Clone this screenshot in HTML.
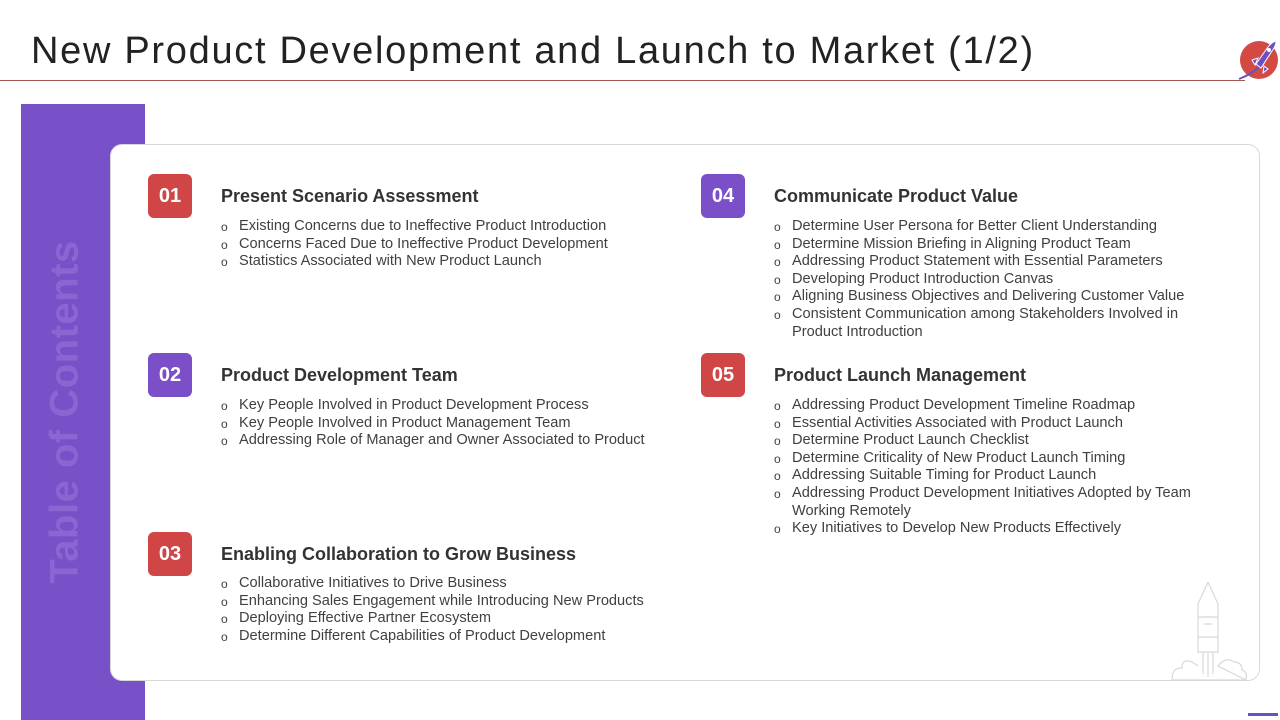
<!DOCTYPE html>
<html><head><meta charset="utf-8"><style>
*{margin:0;padding:0;box-sizing:border-box}
body{width:1280px;height:720px;overflow:hidden;background:#fff;font-family:"Liberation Sans",sans-serif;position:relative}
.title{position:absolute;left:31px;top:30px;font-size:38px;color:#222;letter-spacing:1.7px;white-space:nowrap}
.rule{position:absolute;left:0;top:80px;width:1245px;height:1px;background:#a5584f}
.side{position:absolute;left:21px;top:104px;width:124px;height:616px;background:#7850c8}
.vt{position:absolute;left:65px;top:412px;transform:translate(-50%,-50%) rotate(-90deg);font-size:40px;font-weight:bold;color:#8a66d2;white-space:nowrap;letter-spacing:0.5px}
.card{position:absolute;left:110px;top:144px;width:1150px;height:537px;background:#fff;border:1px solid #d8d8d8;border-radius:12px}
.badge{position:absolute;width:44px;height:44px;border-radius:6px;color:#fff;font-weight:bold;font-size:20px;text-align:center;line-height:44px}
.r{background:#d04545}.p{background:#7a4fc8}
.h{position:absolute;font-size:18px;font-weight:bold;color:#333;white-space:nowrap}
ul{position:absolute;list-style:none;font-size:14.6px;line-height:17.6px;color:#404040}
li{padding-left:18px;position:relative}
li:before{content:"o";position:absolute;left:0;top:1px;font-size:12px}
</style></head><body>
<div class="title">New Product Development and Launch to Market (1/2)</div>
<div class="rule"></div>
<svg style="position:absolute;left:1236px;top:38px" width="44" height="44" viewBox="0 0 44 44">
<circle cx="23" cy="22" r="19" fill="#d34a44"/>
<path d="M3 41 Q16 36 24 28" stroke="#6c4fc4" stroke-width="2" fill="none"/>
<path d="M20 26 L32 9 Q36 4 40 3 Q40 8 36 13 L25 30 Z" fill="#6c4fc4" stroke="#fff" stroke-width="1"/>
<path d="M22 20 L16 22 L19 27 Z M28 28 L27 35 L32 31 Z" fill="#6c4fc4" stroke="#fff" stroke-width="1"/>
<circle cx="33" cy="12" r="2" fill="#fff"/>
</svg>
<div class="side"></div>
<div class="vt">Table of Contents</div>
<div class="card"></div>
<svg style="position:absolute;left:1170px;top:582px" width="80" height="100" viewBox="0 0 80 100" fill="none" stroke="#d8d8d8" stroke-width="1.2">
<path d="M38 0 L28 22 L28 70 L48 70 L48 22 Z"/><path d="M28 35 H48 M28 55 H48 M34 42 H42"/>
<path d="M33 70 V92 M38 70 V95 M43 70 V92"/>
<path d="M2 98 Q2 85 12 86 Q12 76 22 80 L28 84 M48 84 Q56 74 64 80 Q72 80 72 88 Q78 90 76 98 Z M2 98 H76"/>
</svg>
<div style="position:absolute;left:1248px;top:713px;width:30px;height:3px;background:#6c4fc4"></div>

<div class="badge r" style="left:148px;top:174px">01</div>
<div class="h" style="left:221px;top:186px">Present Scenario Assessment</div>
<ul style="left:221px;top:218px"><li>Existing Concerns due to Ineffective Product Introduction</li><li>Concerns Faced Due to Ineffective Product Development</li><li>Statistics Associated with New Product Launch</li></ul>

<div class="badge p" style="left:148px;top:353px">02</div>
<div class="h" style="left:221px;top:365px">Product Development Team</div>
<ul style="left:221px;top:397px"><li>Key People Involved in Product Development Process</li><li>Key People Involved in Product Management Team</li><li>Addressing Role of Manager and Owner Associated to Product</li></ul>

<div class="badge r" style="left:148px;top:532px">03</div>
<div class="h" style="left:221px;top:544px">Enabling Collaboration to Grow Business</div>
<ul style="left:221px;top:575px"><li>Collaborative Initiatives to Drive Business</li><li>Enhancing Sales Engagement while Introducing New Products</li><li>Deploying Effective Partner Ecosystem</li><li>Determine Different Capabilities of Product Development</li></ul>

<div class="badge p" style="left:701px;top:174px">04</div>
<div class="h" style="left:774px;top:186px">Communicate Product Value</div>
<ul style="left:774px;top:218px;width:425px"><li>Determine User Persona for Better Client Understanding</li><li>Determine Mission Briefing in Aligning Product Team</li><li>Addressing Product Statement with Essential Parameters</li><li>Developing Product Introduction Canvas</li><li>Aligning Business Objectives and Delivering Customer Value</li><li>Consistent Communication among Stakeholders Involved in Product Introduction</li></ul>

<div class="badge r" style="left:701px;top:353px">05</div>
<div class="h" style="left:774px;top:365px">Product Launch Management</div>
<ul style="left:774px;top:397px;width:430px"><li>Addressing Product Development Timeline Roadmap</li><li>Essential Activities Associated with Product Launch</li><li>Determine Product Launch Checklist</li><li>Determine Criticality of New Product Launch Timing</li><li>Addressing Suitable Timing for Product Launch</li><li>Addressing Product Development Initiatives Adopted by Team Working Remotely</li><li>Key Initiatives to Develop New Products Effectively</li></ul>
</body></html>
